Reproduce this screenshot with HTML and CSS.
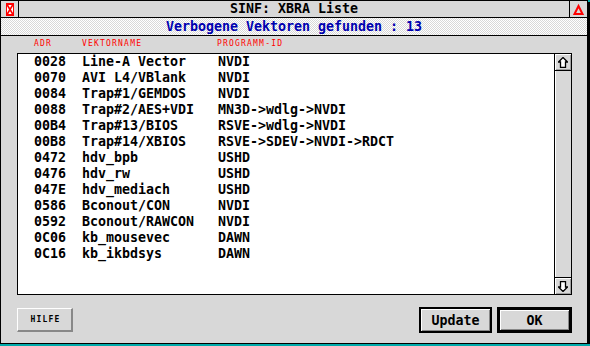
FILE: index.html
```html
<!DOCTYPE html>
<html lang="de">
<head>
  <meta charset="UTF-8">
  <title>SINF: XBRA Liste</title>
  <link rel="stylesheet" href="styles.css">
</head>
<body>
  <div class="window">
    <div class="title-bar">
      <div class="close-box">
        <svg width="17" height="16" viewBox="0 0 17 16">
          <rect x="5.5" y="2.5" width="7" height="12" fill="#fff" stroke="#f00"/>
          <path d="M6 3.5 L12 13.5 M12 3.5 L6 13.5" stroke="#f00" stroke-width="1.6" fill="none"/>
          <path d="M5 3 H13 M5 14 H13" stroke="#f00" stroke-width="2"/>
        </svg>
      </div>
      <div class="title">SINF: XBRA Liste</div>
      <div class="full-box">
        <svg width="17" height="16" viewBox="0 0 17 16">
          <path d="M8.5 5 L12.5 13 L4.5 13 Z" fill="none" stroke="#f00" stroke-width="2" stroke-linejoin="miter"/>
        </svg>
      </div>
    </div>
    <div class="info-line">Verbogene Vektoren gefunden : 13</div>

    <div class="work-area">
      <div class="columns-head">
        <span>ADR</span>
        <span>VEKTORNAME</span>
        <span>PROGRAMM-ID</span>
      </div>

      <div class="list">
        <div class="rows">
          <div class="row"><span>0028</span><span>Line-A Vector</span><span>NVDI</span></div>
          <div class="row"><span>0070</span><span>AVI L4/VBlank</span><span>NVDI</span></div>
          <div class="row"><span>0084</span><span>Trap#1/GEMDOS</span><span>NVDI</span></div>
          <div class="row"><span>0088</span><span>Trap#2/AES+VDI</span><span>MN3D-&gt;wdlg-&gt;NVDI</span></div>
          <div class="row"><span>00B4</span><span>Trap#13/BIOS</span><span>RSVE-&gt;wdlg-&gt;NVDI</span></div>
          <div class="row"><span>00B8</span><span>Trap#14/XBIOS</span><span>RSVE-&gt;SDEV-&gt;NVDI-&gt;RDCT</span></div>
          <div class="row"><span>0472</span><span>hdv_bpb</span><span>USHD</span></div>
          <div class="row"><span>0476</span><span>hdv_rw</span><span>USHD</span></div>
          <div class="row"><span>047E</span><span>hdv_mediach</span><span>USHD</span></div>
          <div class="row"><span>0586</span><span>Bconout/CON</span><span>NVDI</span></div>
          <div class="row"><span>0592</span><span>Bconout/RAWCON</span><span>NVDI</span></div>
          <div class="row"><span>0C06</span><span>kb_mousevec</span><span>DAWN</span></div>
          <div class="row"><span>0C16</span><span>kb_ikbdsys</span><span>DAWN</span></div>
        </div>
        <div class="scrollbar">
          <div class="arrow up">
            <svg width="10" height="11" viewBox="0 0 10 11">
              <path d="M5 0.5 L9.5 5 L7.5 5 L7.5 10.5 L2.5 10.5 L2.5 5 L0.5 5 Z" fill="#fff" stroke="#000" stroke-width="1.3"/>
            </svg>
          </div>
          <div class="track"></div>
          <div class="arrow down">
            <svg width="10" height="11" viewBox="0 0 10 11">
              <path d="M5 10.5 L9.5 6 L7.5 6 L7.5 0.5 L2.5 0.5 L2.5 6 L0.5 6 Z" fill="#fff" stroke="#000" stroke-width="1.3"/>
            </svg>
          </div>
        </div>
      </div>

      <div class="button-row">
        <button class="btn-help">HILFE</button>
        <div class="spacer"></div>
        <button class="btn">Update</button>
        <button class="btn default">OK</button>
      </div>
    </div>
  </div>
</body>
</html>
```

FILE: styles.css
```css
body {
  margin: 0;
  background: #00aaaa;
  font-family: 'DejaVu Sans Mono', 'Liberation Mono', monospace;
}

.window {
  width: 586px;
  height: 342px;
  border: 1px solid #000;
  box-shadow: 2px 2px 0 #000;
  background: #d8d8d8;
  display: flex;
  flex-direction: column;
}

/* title bar with close and full box */
.title-bar {
  display: flex;
  height: 16px;
  border-bottom: 1px solid #000;
}
.close-box,
.full-box {
  width: 17px;
  display: flex;
  align-items: center;
  justify-content: center;
}
.close-box {
  border-right: 1px solid #000;
}
.full-box {
  border-left: 1px solid #000;
}
.title {
  flex: 1;
  text-align: center;
  font-size: 13.3px;
  font-weight: bold;
  line-height: 16px;
  color: #000;
}

.info-line {
  height: 17px;
  border-bottom: 1px solid #000;
  background: repeating-conic-gradient(#d8d8d8 0 25%, #fff 0 50%) 0 0 / 2px 2px;
  text-align: center;
  color: #0000b0;
  font-size: 13.3px;
  font-weight: bold;
  line-height: 17px;
}

.work-area {
  flex: 1;
  display: flex;
  flex-direction: column;
  padding: 0 15px 10px 16px;
}

.columns-head {
  display: grid;
  grid-template-columns: 48px 135px auto;
  padding: 4px 0 5px 17px;
  height: 8px;
  font-size: 8px;
  line-height: 8px;
  letter-spacing: 1.2px;
  color: #f00;
}

/* list box */
.list {
  display: flex;
  height: 240px;
  border: 1px solid #000;
  background: #fff;
}
.rows {
  flex: 1;
}
.row {
  display: grid;
  grid-template-columns: 48px 136px auto;
  padding-left: 16px;
  height: 16px;
  font-size: 13.3px;
  font-weight: bold;
  line-height: 16px;
  color: #000;
  white-space: pre;
}

.scrollbar {
  width: 16px;
  border-left: 1px solid #000;
  display: flex;
  flex-direction: column;
  background: #d8d8d8;
}
.arrow {
  height: 16px;
  display: flex;
  align-items: center;
  justify-content: center;
  box-shadow: inset 1px 1px 0 #fff, inset -1px -1px 0 #a0a0a0;
}
.arrow.up {
  border-bottom: 1px solid #000;
}
.arrow.down {
  border-top: 1px solid #000;
}
.track {
  flex: 1;
  box-shadow: inset 1px 0 0 #fff;
}

/* buttons */
.button-row {
  display: flex;
  align-items: center;
  height: 26px;
  margin-top: 12px;
}
.spacer {
  flex: 1;
}
.btn-help {
  width: 56px;
  height: 24px;
  box-sizing: border-box;
  padding: 0 0 0 2px;
  border-style: solid;
  border-width: 1px 2px 2px 1px;
  border-color: #fff #888 #888 #fff;
  background: #d8d8d8;
  font-family: 'DejaVu Sans Mono', monospace;
  font-size: 8px;
  font-weight: bold;
  letter-spacing: 1.2px;
  color: #000;
}
.btn {
  width: 73px;
  height: 26px;
  box-sizing: border-box;
  padding: 0;
  border: 2px solid #000;
  background: #d8d8d8;
  box-shadow: inset 1px 1px 0 #fff, inset -1px -1px 0 #888;
  font-family: 'DejaVu Sans Mono', monospace;
  font-size: 13.3px;
  font-weight: bold;
  color: #000;
}
.btn.default {
  width: 75px;
  margin-left: 5px;
  border-width: 3px;
}
```
